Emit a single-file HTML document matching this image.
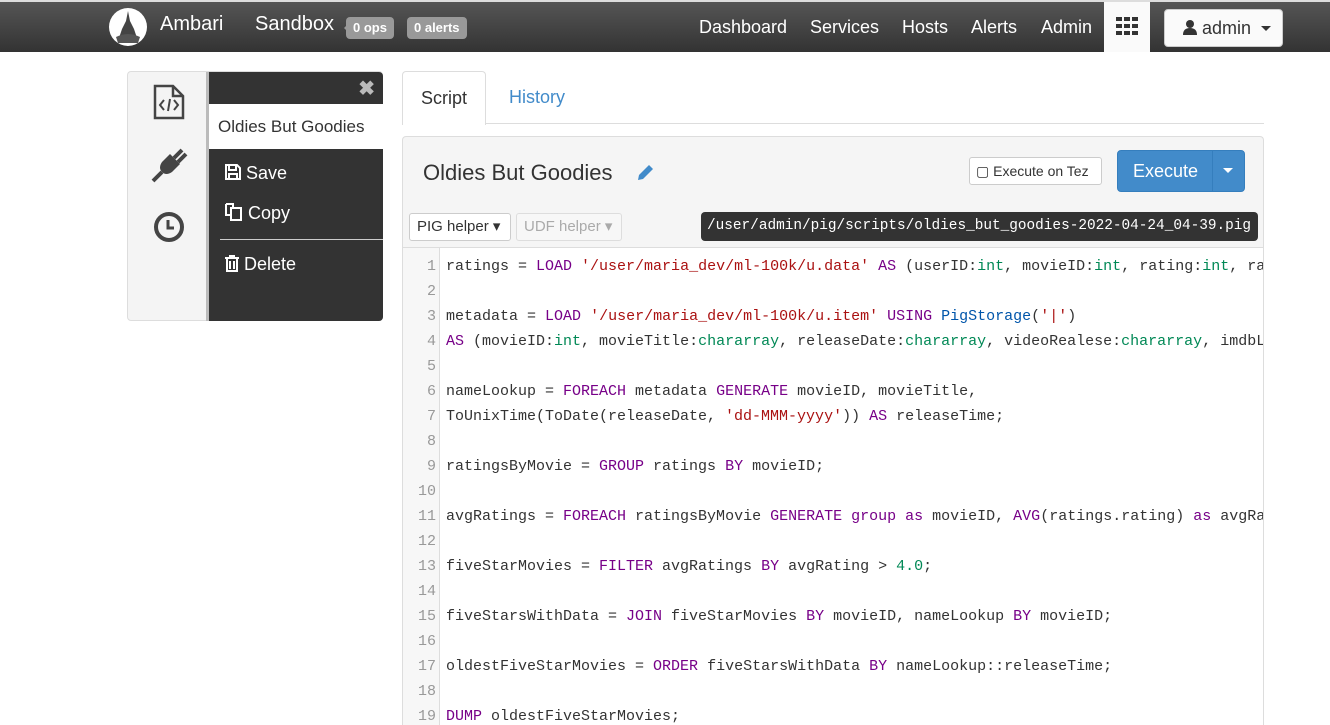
<!DOCTYPE html>
<html style="overflow:hidden;height:725px"><head><meta charset="utf-8"><style>
*{box-sizing:border-box}
body{margin:0;width:1330px;height:725px;overflow:hidden;background:#fff;font-family:"Liberation Sans",sans-serif;color:#333;position:relative}
.nav{position:absolute;left:0;top:0;width:1330px;height:52px;background:linear-gradient(#555,#333);border-top:2px solid #ddd}
.nav span{position:absolute;color:#fff}
.badge{position:absolute;top:15px;height:22px;background:#999;color:#fff;border-radius:4px;font-size:13px;font-weight:bold;line-height:22px;padding:0 7px}
.nl{position:absolute;top:15px;font-size:18px;color:#ccc}
.side{position:absolute;left:127px;top:71px;width:256px;height:250px;border:1px solid #ddd;border-radius:4px;background:#f4f4f4}
.dark{position:absolute;left:78px;top:0;width:177px;height:249px;background:#333;border-left:3px solid #bbb;border-radius:0 4px 4px 0}
.mi{position:absolute;left:16px;color:#fff;font-size:18px}
.tabs{position:absolute;left:402px;top:71px;width:862px;height:53px;border-bottom:1px solid #ddd}
.panel{position:absolute;left:402px;top:136px;width:862px;height:589px;border:1px solid #ddd;border-bottom:none;border-radius:4px 4px 0 0;background:#f5f5f5;overflow:hidden}
.code{position:absolute;left:0;top:110px;width:860px;height:480px;background:#fff;border-top:1px solid #ddd;font-family:"Liberation Mono",monospace;font-size:15px}
.gut{position:absolute;left:0;top:0;width:37px;height:480px;background:#f7f7f7;border-right:1px solid #ddd}
.ln{position:absolute;height:25px;line-height:25px;white-space:pre}
.n{width:33px;text-align:right;color:#999}
.k{color:#708}.s{color:#a11}.t{color:#085}
</style></head><body>
<div class="nav">
<svg style="position:absolute;left:108px;top:5px" width="40" height="40" viewBox="0 0 40 40"><circle cx="20" cy="20" r="19" fill="#fff"/><path d="M20 4 L22 14 L26 22 L30 34 L10 34 L14 22 L18 14Z" fill="#444"/><path d="M8 30 Q20 24 32 30 L30 36 L10 36Z" fill="#555"/></svg>
<span style="left:160px;top:11px;font-size:20px">Ambari</span>
<span style="left:255px;top:11px;font-size:20px">Sandbox</span>
<div style="position:absolute;left:338px;top:20px;width:0;height:0;border:6px solid transparent;border-right-color:#999"></div>
<div class="badge" style="left:346px">0 ops</div>
<div class="badge" style="left:407px">0 alerts</div>
<span class="nl" style="left:699px">Dashboard</span>
<span class="nl" style="left:810px">Services</span>
<span class="nl" style="left:902px">Hosts</span>
<span class="nl" style="left:971px">Alerts</span>
<span class="nl" style="left:1041px">Admin</span>
<div style="position:absolute;left:1104px;top:0;width:46px;height:50px;background:#fafafa"><svg style="position:absolute;left:12px;top:15px" width="22" height="18"><g fill="#333"><rect x="0" y="0" width="6" height="4"/><rect x="8" y="0" width="6" height="4"/><rect x="16" y="0" width="6" height="4"/><rect x="0" y="7" width="6" height="4"/><rect x="8" y="7" width="6" height="4"/><rect x="16" y="7" width="6" height="4"/><rect x="0" y="14" width="6" height="4"/><rect x="8" y="14" width="6" height="4"/><rect x="16" y="14" width="6" height="4"/></g></svg></div>
<div style="position:absolute;left:1164px;top:7px;width:119px;height:38px;background:#fafafa;border:1px solid #ccc;border-radius:4px;font-size:18px;line-height:36px;padding-left:18px;color:#333;white-space:nowrap"><svg width="14" height="15" viewBox="0 0 14 15" style="vertical-align:-1px"><circle cx="7" cy="4" r="4" fill="#333"/><path d="M0 15 Q0 8 7 8 Q14 8 14 15Z" fill="#333"/></svg> admin<div style="position:absolute;left:96px;top:16px;width:0;height:0;border-left:5px solid transparent;border-right:5px solid transparent;border-top:5px solid #333"></div></div>
</div>

<div class="side">
<svg style="position:absolute;left:25px;top:12px" width="32" height="36" viewBox="0 0 32 36" fill="none" stroke="#444" stroke-width="2.5"><path d="M2 2 H20 L30 12 V34 H2Z"/><path d="M20 2 V12 H30"/><path d="M11 16 L7 21 L11 26 M21 16 L25 21 L21 26 M17 15 L15 27" stroke-width="2"/></svg>
<svg style="position:absolute;left:22px;top:74px" width="38" height="38" viewBox="0 0 38 38"><path d="M20 8 L30 18 L22 26 Q16 30 12 26 Q8 22 12 16Z" fill="#444"/><path d="M24 12 L32 4 M28 16 L36 8" stroke="#444" stroke-width="4"/><path d="M12 26 L3 35" stroke="#444" stroke-width="4"/></svg>
<svg style="position:absolute;left:25px;top:139px" width="32" height="32"><circle cx="16" cy="16" r="13" fill="none" stroke="#444" stroke-width="4"/><path d="M15 9 V17 H21" fill="none" stroke="#444" stroke-width="3"/></svg>
<div class="dark">
<div style="position:absolute;right:8px;top:4px;color:#bbb;font-size:20px;font-weight:bold">✖</div>
<div style="position:absolute;left:0;top:32px;width:174px;height:45px;background:#fff;font-size:17px;line-height:45px;padding-left:9px;color:#333">Oldies But Goodies</div>
<div class="mi" style="top:91px"><svg width="16" height="16" viewBox="0 0 16 16" style="vertical-align:-1px"><path d="M1 1 H12 L15 4 V15 H1Z M4 1 V6 H11 V1 M4 15 V10 H12 V15" fill="none" stroke="#fff" stroke-width="2"/></svg> Save</div>
<div class="mi" style="top:131px"><svg width="18" height="18" viewBox="0 0 18 18" style="vertical-align:-2px"><path d="M1 1 H8 V4 M1 1 V12 H5 M6 5 H16 V17 H6Z" fill="none" stroke="#fff" stroke-width="2"/></svg> Copy</div>
<div style="position:absolute;left:11px;top:167px;width:163px;height:1px;background:#ccc"></div>
<div class="mi" style="top:182px"><svg width="14" height="17" viewBox="0 0 14 17" style="vertical-align:-2px"><path d="M0 3 H14 M5 3 V1 H9 V3 M2 4 V16 H12 V4 M5 6 V14 M9 6 V14" fill="none" stroke="#fff" stroke-width="2"/></svg> Delete</div>
</div></div>

<div class="tabs">
<div style="position:absolute;left:0;top:0;width:84px;height:54px;background:#fff;border:1px solid #ddd;border-bottom:none;border-radius:4px 4px 0 0;font-size:18px;line-height:52px;text-align:center">Script</div>
<div style="position:absolute;left:107px;top:16px;font-size:18px;color:#428bca">History</div>
</div>

<div class="panel">
<div style="position:absolute;left:20px;top:23px;font-size:22px;color:#333">Oldies But Goodies</div>
<svg style="position:absolute;left:232px;top:26px" width="20" height="20" viewBox="0 0 20 20"><path d="M3 17 L4 12 L14 2 L18 6 L8 16Z" fill="#428bca"/></svg>
<div style="position:absolute;left:566px;top:20px;width:133px;height:28px;background:#fff;border:1px solid #ccc;border-radius:3px;font-size:14px;line-height:26px;padding-left:6px">▢ Execute on Tez</div>
<div style="position:absolute;left:714px;top:13px;width:128px;height:42px;background:#428bca;border:1px solid #357ebd;border-radius:4px;color:#fff;font-size:18px;line-height:40px;padding-left:15px">Execute</div>
<div style="position:absolute;left:809px;top:14px;width:1px;height:40px;background:#357ebd"></div>
<div style="position:absolute;left:820px;top:31px;border:5px solid transparent;border-top-color:#fff"></div>
<div style="position:absolute;left:6px;top:76px;width:102px;height:28px;background:#fff;border:1px solid #ccc;border-radius:3px;font-size:15px;line-height:26px;padding-left:7px">PIG helper ▾</div>
<div style="position:absolute;left:113px;top:76px;width:106px;height:28px;background:#f7f7f7;border:1px solid #ddd;border-radius:3px;font-size:15px;line-height:26px;padding-left:7px;color:#aaa">UDF helper ▾</div>
<div style="position:absolute;left:298px;top:75px;width:557px;height:29px;background:#333;border-radius:4px;color:#fff;font-family:'Liberation Mono',monospace;font-size:14.4px;line-height:29px;padding-left:6px;white-space:nowrap;overflow:hidden">/user/admin/pig/scripts/oldies_but_goodies-2022-04-24_04-39.pig</div>
<div class="code">
<div class="gut"></div>
<div style="position:absolute;left:0;top:6px;width:860px">
<div class="ln n" style="top:0">1</div><div class="ln n" style="top:25px">2</div><div class="ln n" style="top:50px">3</div><div class="ln n" style="top:75px">4</div><div class="ln n" style="top:100px">5</div><div class="ln n" style="top:125px">6</div><div class="ln n" style="top:150px">7</div><div class="ln n" style="top:175px">8</div><div class="ln n" style="top:200px">9</div><div class="ln n" style="top:225px">10</div><div class="ln n" style="top:250px">11</div><div class="ln n" style="top:275px">12</div><div class="ln n" style="top:300px">13</div><div class="ln n" style="top:325px">14</div><div class="ln n" style="top:350px">15</div><div class="ln n" style="top:375px">16</div><div class="ln n" style="top:400px">17</div><div class="ln n" style="top:425px">18</div><div class="ln n" style="top:450px">19</div>
<div style="position:absolute;left:43px;top:0;width:817px;height:480px;overflow:hidden">
<div class="ln" style="top:0">ratings = <span class="k">LOAD</span> <span class="s">'/user/maria_dev/ml-100k/u.data'</span> <span class="k">AS</span> (userID:<span class="t">int</span>, movieID:<span class="t">int</span>, rating:<span class="t">int</span>, ratingTime:<span class="t">int</span>);</div>
<div class="ln" style="top:50px">metadata = <span class="k">LOAD</span> <span class="s">'/user/maria_dev/ml-100k/u.item'</span> <span class="k">USING</span> <span style="color:#05a">PigStorage</span>(<span class="s">'|'</span>)</div>
<div class="ln" style="top:75px"><span class="k">AS</span> (movieID:<span class="t">int</span>, movieTitle:<span class="t">chararray</span>, releaseDate:<span class="t">chararray</span>, videoRealese:<span class="t">chararray</span>, imdbLink:<span class="t">chararray</span>);</div>
<div class="ln" style="top:125px">nameLookup = <span class="k">FOREACH</span> metadata <span class="k">GENERATE</span> movieID, movieTitle,</div>
<div class="ln" style="top:150px">ToUnixTime(ToDate(releaseDate, <span class="s">'dd-MMM-yyyy'</span>)) <span class="k">AS</span> releaseTime;</div>
<div class="ln" style="top:200px">ratingsByMovie = <span class="k">GROUP</span> ratings <span class="k">BY</span> movieID;</div>
<div class="ln" style="top:250px">avgRatings = <span class="k">FOREACH</span> ratingsByMovie <span class="k">GENERATE</span> <span class="k">group</span> <span class="k">as</span> movieID, <span class="k">AVG</span>(ratings.rating) <span class="k">as</span> avgRating;</div>
<div class="ln" style="top:300px">fiveStarMovies = <span class="k">FILTER</span> avgRatings <span class="k">BY</span> avgRating &gt; <span class="t">4.0</span>;</div>
<div class="ln" style="top:350px">fiveStarsWithData = <span class="k">JOIN</span> fiveStarMovies <span class="k">BY</span> movieID, nameLookup <span class="k">BY</span> movieID;</div>
<div class="ln" style="top:400px">oldestFiveStarMovies = <span class="k">ORDER</span> fiveStarsWithData <span class="k">BY</span> nameLookup::releaseTime;</div>
<div class="ln" style="top:450px"><span class="k">DUMP</span> oldestFiveStarMovies;</div>
</div></div></div></div>
</body></html>
